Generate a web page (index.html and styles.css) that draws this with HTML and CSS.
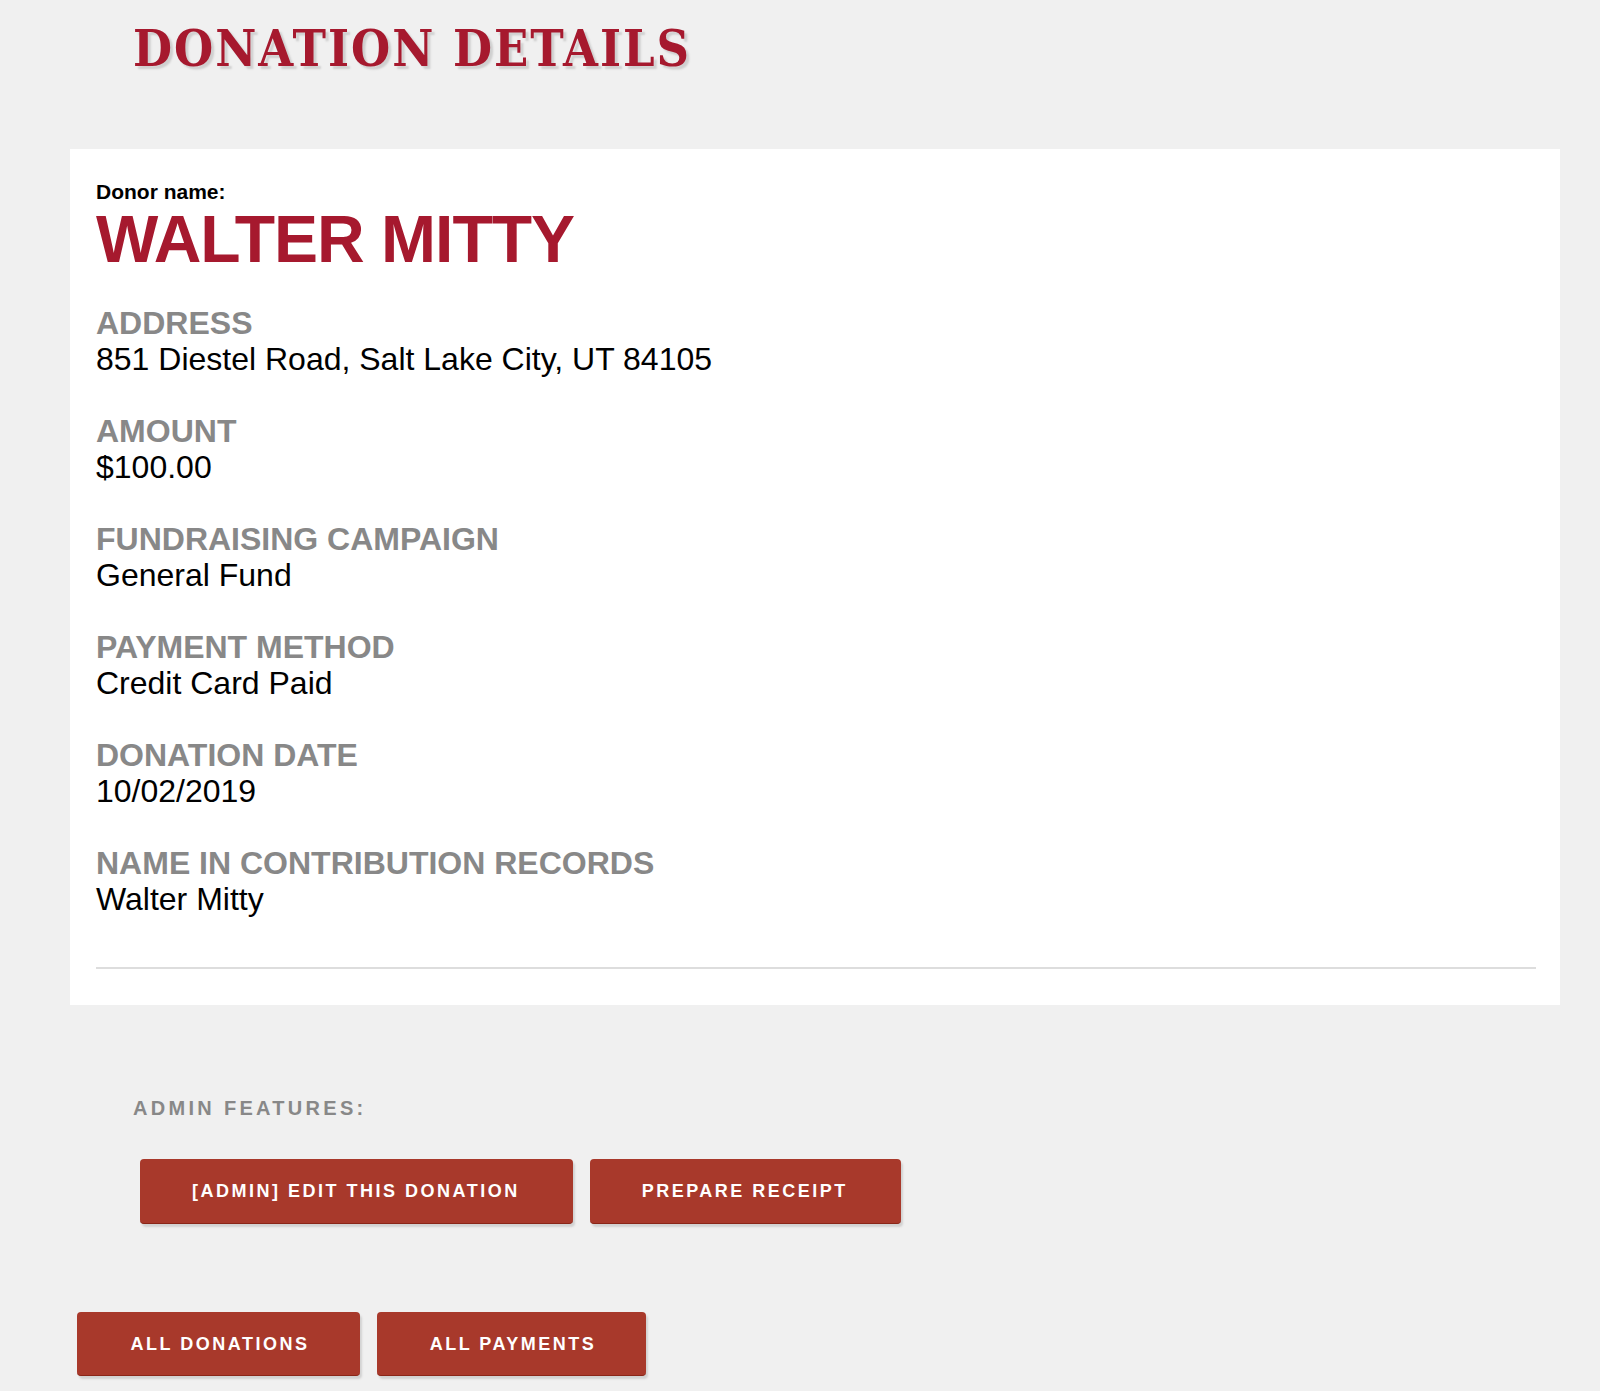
FILE: index.html
```html
<!DOCTYPE html>
<html lang="en">
<head>
    <meta charset="UTF-8">
    <meta name="viewport" content="width=device-width, initial-scale=1.0">
    <title>Donation Details</title>
    <link rel="stylesheet" href="styles.css">
</head>
<body>
    <div class="page">
        <h1 class="page-title">DONATION DETAILS</h1>

        <div class="card">
            <div class="donor-label">Donor name:</div>
            <div class="donor-name">WALTER MITTY</div>

            <div class="field">
                <div class="field-label">ADDRESS</div>
                <div class="field-value">851 Diestel Road, Salt Lake City, UT 84105</div>
            </div>
            <div class="field">
                <div class="field-label">AMOUNT</div>
                <div class="field-value">$100.00</div>
            </div>
            <div class="field">
                <div class="field-label">FUNDRAISING CAMPAIGN</div>
                <div class="field-value">General Fund</div>
            </div>
            <div class="field">
                <div class="field-label">PAYMENT METHOD</div>
                <div class="field-value">Credit Card Paid</div>
            </div>
            <div class="field">
                <div class="field-label">DONATION DATE</div>
                <div class="field-value">10/02/2019</div>
            </div>
            <div class="field">
                <div class="field-label">NAME IN CONTRIBUTION RECORDS</div>
                <div class="field-value">Walter Mitty</div>
            </div>

            <hr class="divider">
        </div>

        <div class="admin">
            <h3 class="admin-title">ADMIN FEATURES:</h3>
            <div class="btn-row">
                <a class="btn" href="#">[ADMIN] EDIT THIS DONATION</a>
                <a class="btn" href="#">PREPARE RECEIPT</a>
            </div>
        </div>

        <div class="btn-row nav-row">
            <a class="btn btn-wide" href="#">ALL DONATIONS</a>
            <a class="btn btn-wide" href="#">ALL PAYMENTS</a>
        </div>
    </div>
</body>
</html>
```

FILE: styles.css
```css
/* Base */
body {
    margin: 0;
    padding: 0;
    background-color: #f0f0f0;
    color: #000;
    font-family: 'Liberation Sans', Arial, sans-serif;
}
.page {
    padding: 0 40px 14px 70px;
}

/* Title */
.page-title {
    margin: 0;
    padding: 19px 0 0 63px;
    height: 149px;
    box-sizing: border-box;
    font-family: 'DejaVu Serif', serif;
    font-stretch: condensed;
    font-weight: bold;
    font-size: 50px;
    line-height: 60px;
    letter-spacing: 2px;
    color: #a6192e;
    text-shadow: 3px 3px 2px #cfcfcf;
}

/* Card */
.card {
    background-color: #fff;
    padding: 31px 24px 36px 26px;
}
.donor-label {
    font-weight: bold;
    font-size: 21px;
    line-height: 24px;
}
.donor-name {
    margin: 2px 0 33px;
    font-weight: bold;
    font-size: 66px;
    line-height: 66px;
    letter-spacing: -1px;
    color: #a6192e;
}
.field {
    margin-bottom: 36px;
}
.field-label {
    font-weight: bold;
    font-size: 32px;
    line-height: 36px;
    color: #888;
}
.field-value {
    font-size: 32px;
    line-height: 36px;
}
.divider {
    margin: 50px 0 0;
    border: none;
    border-top: 2px solid #ddd;
}

/* Admin */
.admin {
    padding: 91px 0 0 63px;
}
.admin-title {
    margin: 0 0 39px;
    font-size: 20px;
    line-height: 24px;
    letter-spacing: 3.3px;
    color: #888;
}
.admin .btn-row {
    padding-left: 7px;
}

/* Buttons */
.btn-row {
    display: flex;
    gap: 17px;
}
.btn {
    display: inline-block;
    height: 65px;
    line-height: 64px;
    padding: 0 53px 0 52px;
    box-sizing: border-box;
    background-color: #a8392b;
    border-bottom: 1px solid #8a2618;
    border-radius: 4px;
    box-shadow: 2px 3px 2px #d2d2d2;
    color: #fff;
    font-weight: bold;
    font-size: 18px;
    letter-spacing: 2.5px;
    text-decoration: none;
}
.nav-row {
    margin-top: 88px;
    padding-left: 7px;
}
.btn-wide {
    height: 64px;
    padding: 0 48px 0 51px;
    width: 283px;
    text-align: center;
}
.btn-wide + .btn-wide {
    width: 269px;
}
```
